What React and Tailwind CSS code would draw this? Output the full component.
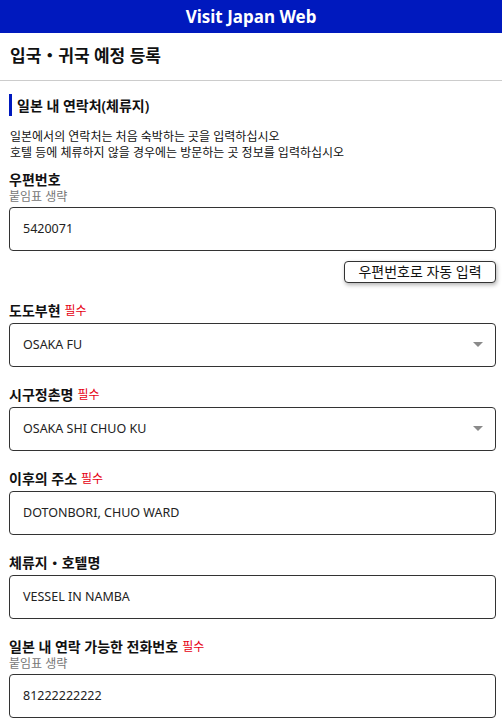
const font = { fontFamily: '"Noto Sans", "Noto Sans CJK KR", sans-serif' };

const Required = () => (
  <span className="ml-[4px] text-[12px] font-normal text-[#e60012]">필수</span>
);

const Field = ({ label, required, hint, value, select, className = '' }) => (
  <div className={`flex flex-col ${className}`}>
    <div className="flex items-center h-[18px] text-[14px] font-bold text-[#111] leading-[18px]">
      {label}
      {required && <Required />}
    </div>
    {hint && <div className="h-[15px] text-[12px] leading-[15px] text-[#777]">{hint}</div>}
    <div className="mt-[3px] h-[44px] rounded-[4px] border border-[#333] bg-white flex items-center justify-between pl-[13px] pr-[12px]">
      <span className="text-[12.5px] text-[#222]">{value}</span>
      {select && (
        <svg width="10" height="6" viewBox="0 0 10 6">
          <path d="M0 0 H10 L5 5 Z" fill="#8a8a8a" />
        </svg>
      )}
    </div>
  </div>
);

export default function App() {
  return (
    <div className="w-[502px] min-h-[725px] bg-white" style={font}>
      <header className="h-[33px] bg-[#0019be] flex items-center justify-center">
        <span className="text-white text-[17px] font-bold">Visit Japan Web</span>
      </header>

      <div className="h-[48px] border-b border-[#cccccc] flex items-center pl-[10px] pb-[2px]">
        <h1 className="text-[17px] font-bold text-[#111]">입국・귀국 예정 등록</h1>
      </div>

      <main className="pl-[9px] pr-[6px]">
        <div className="mt-[13px] h-[22px] border-l-[3px] border-[#0019be] pl-[5px] flex items-center">
          <h2 className="text-[14px] font-semibold text-[#111]">일본 내 연락처(체류지)</h2>
        </div>

        <p className="mt-[13px] pl-[1px] text-[12px] leading-[16px] text-[#111]">
          일본에서의 연락처는 처음 숙박하는 곳을 입력하십시오
          <br />
          호텔 등에 체류하지 않을 경우에는 방문하는 곳 정보를 입력하십시오
        </p>

        <Field className="mt-[10px]" label="우편번호" hint="붙임표 생략" value="5420071" />

        <div className="flex justify-end mt-[10px]">
          <button className="w-[152px] h-[22px] rounded-[4px] border border-[#333] bg-white text-[14px] text-[#111] leading-none shadow-[1px_2px_4px_rgba(0,0,0,0.3)]">
            우편번호로 자동 입력
          </button>
        </div>

        <Field className="mt-[19px]" label="도도부현" required value="OSAKA FU" select />
        <Field className="mt-[19px]" label="시구정촌명" required value="OSAKA SHI CHUO KU" select />
        <Field className="mt-[19px]" label="이후의 주소" required value="DOTONBORI, CHUO WARD" />
        <Field className="mt-[19px]" label="체류지・호텔명" value="VESSEL IN NAMBA" />
        <Field
          className="mt-[19px]"
          label="일본 내 연락 가능한 전화번호"
          required
          hint="붙임표 생략"
          value="81222222222"
        />
      </main>
    </div>
  );
}
